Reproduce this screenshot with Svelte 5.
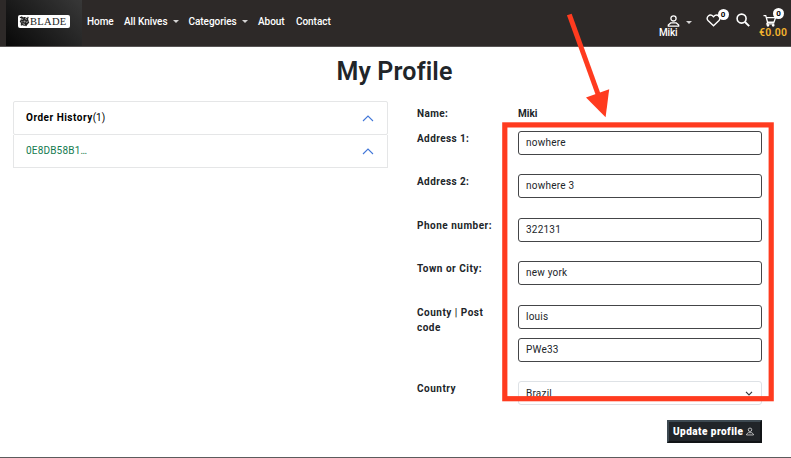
<script>
  const nav = [
    { label: 'Home', width: 37 },
    { label: 'All Knives', width: 64.5, menu: true },
    { label: 'Categories', width: 69.5, menu: true },
    { label: 'About', width: 38 },
    { label: 'Contact', width: 40 }
  ];
  const fields = [
    { label: 'Address 1:', values: ['nowhere'] },
    { label: 'Address 2:', values: ['nowhere 3'] },
    { label: 'Phone number:', values: ['322131'] },
    { label: 'Town or City:', values: ['new york'] },
    { label: 'County | Post code', values: ['louis', 'PWe33'] }
  ];
</script>

{#snippet person()}
  <svg class="person" viewBox="0 0 12 12" fill="none" stroke="currentColor" stroke-width="1.3">
    <circle cx="6" cy="3.4" r="2.6" />
    <path d="M3.4 7.8h5.2L11.2 10v1.2H.8V10z" stroke-linejoin="round" />
  </svg>
{/snippet}

<div class="page">
  <header>
    <a class="brand" href="#home" aria-label="Blade">
      <span class="logo">
        <svg viewBox="0 0 12 12">
          <circle cx="6" cy="6" r="4.6" fill="#222" />
          <path d="M1 2l2-1 2 2M10 1l-1 3M11 7L8 8M8 11L7 8M2 10l3-2M1 6l3-1M6 1v3" stroke="#222" stroke-width="1.3" />
          <path d="M2.6 4l2-.8M6.5 2.7l2 1M9 5.7l-.6 2M6.5 9.2L4 8.4M3.2 7V5.6" stroke="#fff" stroke-width=".7" />
          <circle cx="6" cy="6" r="1.2" fill="#999" />
        </svg>
        <span>BLADE</span>
      </span>
    </a>
    <nav>
      {#each nav as item}
        <a href="#nav" style:width="{item.width}px"><span>{item.label}</span>{#if item.menu}<i class="caret"></i>{/if}</a>
      {/each}
    </nav>
    <div class="account">
      <div class="icons">{@render person()}<i class="caret"></i></div>
      <span>Miki</span>
    </div>
    <div class="tool heart">
      <svg viewBox="0 0 15 13" fill="none" stroke="#fff" stroke-width="1.4"><path d="M7.5 11.8L2 6.5C-.8 3.4 3.8-1.3 7.5 2.8 11.2-1.3 15.8 3.4 13 6.5z" /></svg>
      <b class="badge">0</b>
    </div>
    <div class="tool search">
      <svg viewBox="0 0 14 14" fill="none" stroke="#fff" stroke-width="1.6"><circle cx="5.6" cy="5.6" r="4.5" /><path d="M9 9l4.2 4.2" stroke-width="1.9" /></svg>
    </div>
    <div class="tool cart">
      <svg viewBox="0 0 14 14" fill="none" stroke="#fff" stroke-width="1.4"><path d="M0 1.7h2.4l2 7.2h6.8L13 4H3.1M4.4 8.9L3.6 10.6h8" /><circle cx="4.8" cy="12.2" r=".8" /><circle cx="10.4" cy="12.2" r=".8" /></svg>
      <b class="badge">0</b>
      <strong>€0.00</strong>
    </div>
  </header>

  <h1>My Profile</h1>

  <main>
    <section class="orders">
      <div class="order head"><span><b>Order History</b>(1)</span><svg viewBox="0 0 12 7"><path d="M1 6l5-4.9L11 6" /></svg></div>
      <div class="order"><span class="number">0E8DB58B1<span class="dots">...</span></span><svg viewBox="0 0 12 7"><path d="M1 6l5-4.9L11 6" /></svg></div>
    </section>
    <form>
      <div class="row name"><span class="label">Name:</span><b>Miki</b></div>
      {#each fields as field}
        <div class="row">
          <span class="label">{field.label}</span>
          <div class="inputs">
            {#each field.values as value}<div class="input">{value}</div>{/each}
          </div>
        </div>
      {/each}
      <div class="row country">
        <span class="label">Country</span>
        <div class="inputs"><div class="input select"><span>Brazil</span><svg viewBox="0 0 8 5"><path d="M1 .8l3 3 3-3" fill="none" stroke="#343a40" stroke-width="1.2" /></svg></div></div>
      </div>
      <button type="button"><span>Update profile</span>{@render person()}</button>
    </form>
  </main>

  <svg class="annotation" viewBox="0 0 791 458" fill="none">
    <rect x="504.8" y="124.9" width="266.4" height="273.8" stroke="#ff3b1f" stroke-width="5.2" />
    <path d="M569.3 14.5L598 94" stroke="#ff3b1f" stroke-width="5" />
    <path d="M586 97.5l23.2-8.3-3.6 28z" fill="#ff3b1f" />
  </svg>
</div>

<style>
  :global(body) { background: #fff; }
  * { box-sizing: border-box; }
  .page { position: relative; width: 791px; height: 458px; overflow: hidden; border-bottom: 1px solid #5c5b5d; color: #212529; font-family: Roboto, sans-serif; font-size: 10px; line-height: 15.4px; }
  header { display: flex; height: 47px; padding-left: 6px; background: #2d2928; border-bottom: 1px solid #575454; color: #fff; }
  a { color: inherit; text-decoration: none; }
  .brand { width: 76px; height: 46px; padding: 15px 0 0 12px; background: linear-gradient(45deg, #080808, #383838); }
  .logo { display: flex; align-items: center; width: 52px; height: 13px; padding-left: 1px; border-radius: 2px; background: #fff; color: #222; }
  .logo svg { width: 11px; height: 11px; }
  .logo span { font: 10.5px/13px "Liberation Serif", serif; letter-spacing: .3px; }
  nav { display: flex; width: 576px; padding: 14px 0 0 5px; font-weight: 500; letter-spacing: -.05px; }
  nav a { display: flex; white-space: nowrap; }
  .caret { width: 0; height: 0; margin: 5.5px 0 0 5.5px; border: 3px solid transparent; border-top-color: #d4d3d3; border-bottom: 0; }
  .account { width: 48px; font-weight: 500; line-height: 12px; }
  .account > span { margin-left: 1px; letter-spacing: -.2px; }
  .icons { display: flex; height: 27px; padding: 14.5px 0 0 9px; }
  .icons .person { width: 13px; height: 12px; }
  .icons .caret { margin: 6px 0 0 6px; }
  .tool { position: relative; flex: none; }
  .tool svg { display: block; }
  .heart { width: 30px; padding-top: 14px; }
  .heart svg { width: 15px; height: 13px; }
  .search { width: 23px; padding-top: 13px; }
  .search svg { width: 14px; height: 14px; }
  .cart { width: 32px; padding-top: 14px; }
  .cart svg { width: 14px; height: 13px; margin-left: 4px; }
  .cart strong { display: block; color: #f5b52e; font-size: 10.5px; line-height: 12px; font-weight: 600; letter-spacing: .25px; }
  .badge { position: absolute; left: 11.5px; top: 9px; width: 11px; height: 11px; border-radius: 50%; background: #fff; color: #000; font-size: 8px; line-height: 11px; text-align: center; }
  .cart .badge { left: 14px; top: 8px; }
  h1 { margin: 9px 0 0; height: 31px; font-size: 25px; line-height: 31px; font-weight: 600; text-align: center; letter-spacing: .15px; padding-right: 2px; }
  main { display: flex; gap: 29px; padding: 14px 29px 0 13px; }
  .orders { width: 375px; }
  .order { display: flex; justify-content: space-between; align-items: center; height: 33px; padding: 0 13px 0 12px; border: 1px solid #e5e6e7; border-top: 0; }
  .head { height: 34px; border-top: 1px solid #e5e6e7; border-radius: 2px; color: #000; }
  .head b { letter-spacing: .5px; }
  .order svg { width: 12px; height: 7px; fill: none; stroke: #4377d8; stroke-width: 1.1; }
  .number { color: #137b50; letter-spacing: .18px; }
  .dots { letter-spacing: -.6px; }
  form { width: 345px; padding-top: 5px; display: flex; flex-direction: column; }
  .row { display: flex; flex: none; min-height: 43.4px; }
  .row.name { min-height: 25px; height: 25px; }
  .label { width: 101px; padding-right: 20px; font-weight: 700; white-space: nowrap; letter-spacing: .5px; }
  .row:nth-child(1) .label, .row:nth-child(2) .label, .row:nth-child(3) .label { letter-spacing: .4px; }
  .row:nth-child(6) .label { white-space: normal; }
  .inputs { width: 244px; display: flex; flex-direction: column; gap: 9.4px; }
  .input { height: 24px; padding: 0 7px; border: 1px solid #444548; border-radius: 3px; line-height: 22px; letter-spacing: .22px; }
  .row:nth-child(6) { height: 76.8px; }
  .row.country { height: 39px; min-height: 39px; }
  .select { display: flex; align-items: center; justify-content: space-between; border-color: #dee2e6; padding-right: 8px; }
  .select svg { width: 8px; height: 5px; }
  .select span { padding-top: 1px; }
  button { display: flex; align-items: center; align-self: flex-end; width: 95px; height: 23px; padding: 0 0 0 4px; border: 2px solid; border-color: #3d4951 #111416 #111416 #3d4951; background: #212529; color: #fff; font: 900 10px/19px Roboto, sans-serif; letter-spacing: .46px; white-space: nowrap; }
  button .person { width: 8px; height: 9px; margin-left: 3px; stroke-width: 1; }
  .annotation { position: absolute; inset: 0; width: 791px; height: 458px; pointer-events: none; }
</style>
